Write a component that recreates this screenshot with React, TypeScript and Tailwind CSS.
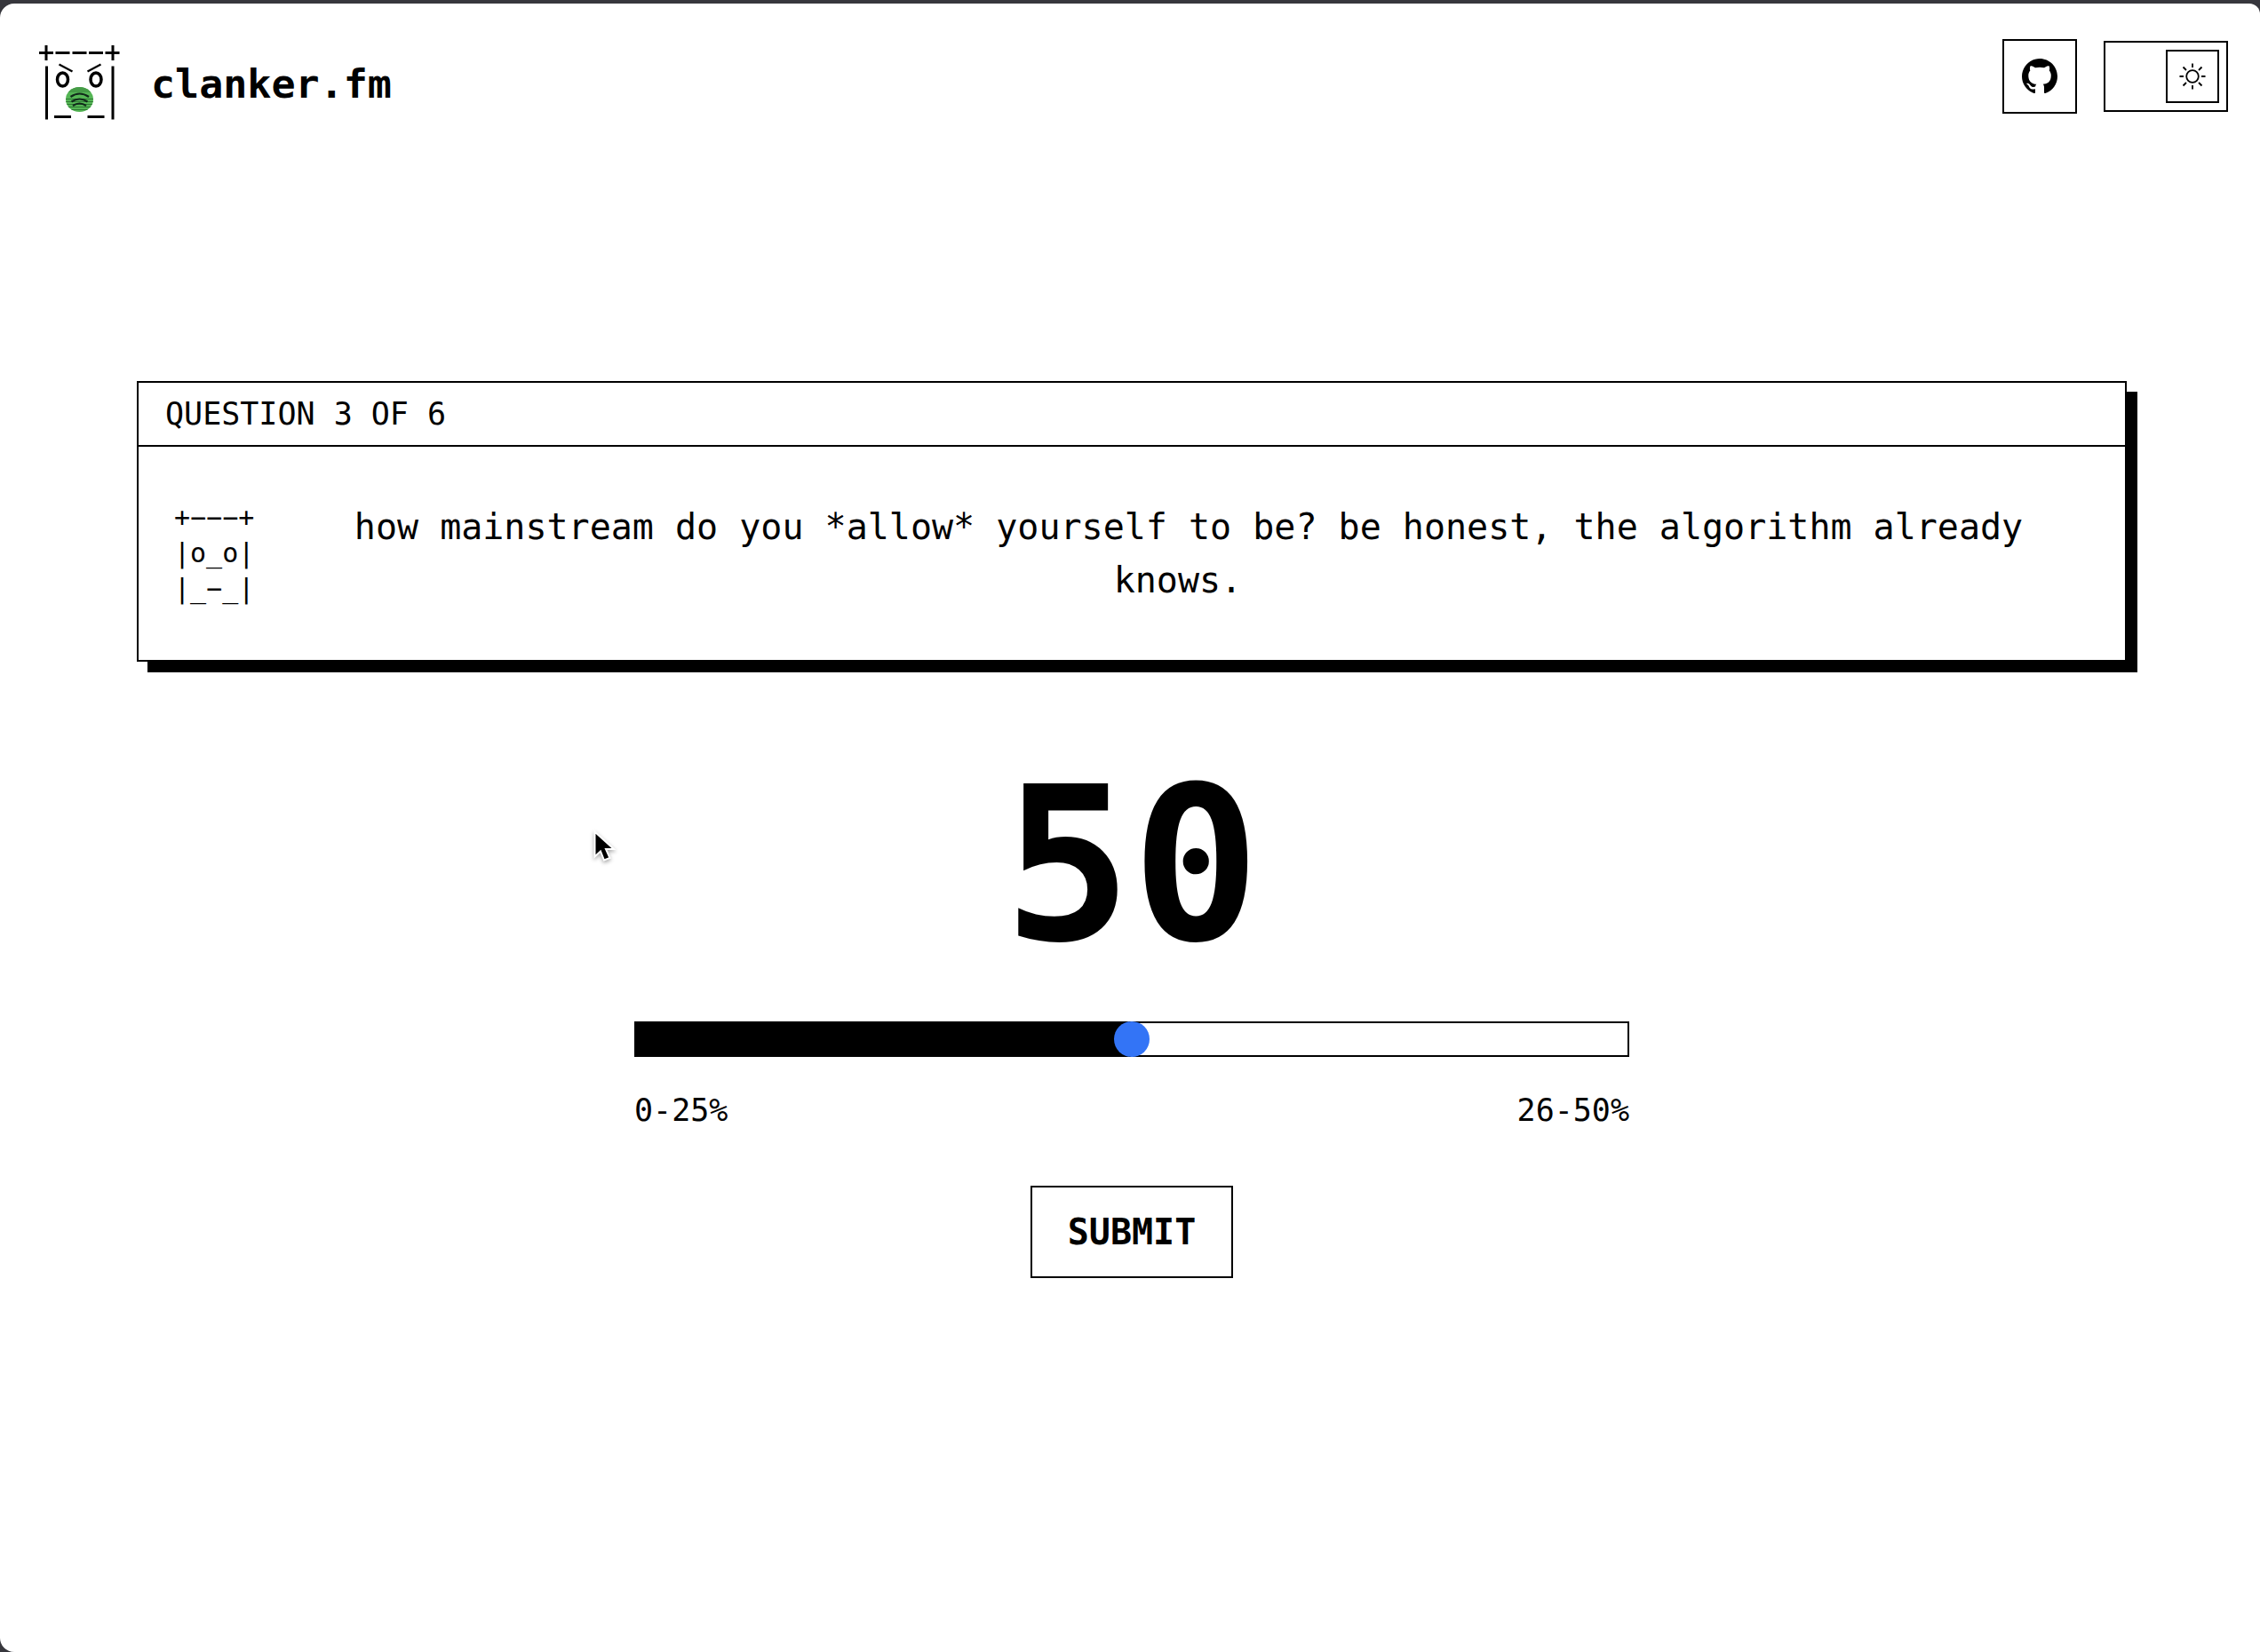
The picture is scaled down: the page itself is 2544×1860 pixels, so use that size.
import { useState } from "react";

function LogoFace() {
  return (
    <svg viewBox="0 0 92 84" className="h-[84px] w-[92px]" fill="none" stroke="#000" aria-hidden="true">
      <clipPath id="mouth">
        <ellipse cx="45.500" cy="61" rx="15.500" ry="14" />
      </clipPath>
      <path d="M0 8.500h16M18.500 8.500h16M37.500 8.500h16M56 8.500h16M74.500 8.500h16M8 0v17M83 0v17" strokeWidth="3" />
      <path d="M8.500 23.500v60M83 23.500v60" strokeWidth="3" />
      <path d="M22.500 21.500l15 8M69.500 21.500l-15 8" strokeWidth="2.200" />
      <ellipse cx="26.500" cy="38.500" rx="6" ry="7.500" strokeWidth="3.500" />
      <ellipse cx="64" cy="38.500" rx="6" ry="7.500" strokeWidth="3.500" />
      <path d="M17 80.500h19M54.500 80.500h19" strokeWidth="3" />
      <g clipPath="url(#mouth)">
        <path d="M30 47h31v28H30z" fill="#55b655" stroke="none" />
        <path d="M30 47h31v6H30z" fill="#459b47" stroke="none" />
        <path d="M30 60.500h31M30 63.500h31M30 66.500h31M30 69.500h31M30 72.500h31" stroke="#2f7a35" strokeWidth="1" />
      </g>
      <path d="M35.500 58q10-7 20.500 0M36.500 63.500q9-6 18 0M38 68q7.500-5 15 0" stroke="#10291a" strokeWidth="2.200" />
    </svg>
  );
}

function GitHubMark() {
  return (
    <svg viewBox="0 0 16 16" className="size-10" fill="#000" aria-hidden="true">
      <path d="M8 0C3.580 0 0 3.580 0 8c0 3.540 2.290 6.530 5.470 7.590.4.070.55-.17.55-.38 0-.19-.01-.82-.01-1.490-2.010.37-2.530-.49-2.690-.94-.09-.23-.48-.94-.82-1.130-.28-.15-.68-.52-.01-.53.63-.01 1.080.58 1.230.82.72 1.210 1.870.87 2.330.66.07-.52.28-.87.51-1.070-1.780-.2-3.640-.89-3.640-3.950 0-.87.31-1.590.82-2.150-.08-.2-.36-1.020.08-2.120 0 0 .67-.21 2.200.82.64-.18 1.320-.27 2-.27s1.360.09 2 .27c1.530-1.040 2.200-.82 2.200-.82.44 1.100.16 1.920.08 2.120.51.56.82 1.270.82 2.150 0 3.070-1.870 3.750-3.650 3.950.29.25.54.73.54 1.480 0 1.070-.01 1.930-.01 2.200 0 .21.15.46.55.38A8.010 8.010 0 0 0 16 8c0-4.420-3.580-8-8-8z" />
    </svg>
  );
}

function SunIcon() {
  return (
    <svg viewBox="0 0 30 30" className="size-[30px]" fill="none" stroke="#000" strokeWidth="1.800" aria-hidden="true">
      <circle cx="15" cy="15" r="6.800" />
      <path d="M15 .500v4.500M15 25v4.500M.500 15H5M25 15h4.500M4.500 4.500l3.500 3.500M22 22l3.500 3.500M25.500 4.500L22 8M8 22l-3.500 3.500" />
    </svg>
  );
}

function Pointer() {
  return (
    <svg viewBox="0 0 28 38" className="pointer-events-none absolute left-[668px] top-[930px] h-[38px] w-7 drop-shadow-[0_2px_2px_rgba(0,0,0,0.35)]" aria-hidden="true">
      <path d="M1.500 2.500v28l6.500-6 4 10 6.500-2.500-4.500-10h9z" fill="#000" stroke="#fff" strokeWidth="2" />
    </svg>
  );
}

const face = "+−−−+\n|o_o|\n|_−_|";

export default function App() {
  const [value, setValue] = useState(50);
  const [light, setLight] = useState(true);

  return (
    <div className="min-h-screen bg-[#37373d] pt-1 font-['DejaVu_Sans_Mono',monospace] text-black">
      <div className="relative flex min-h-[calc(100vh-4px)] flex-col rounded-l-[16px] rounded-tr-[12px] bg-white pl-1">
        <header className="flex items-start justify-between pl-10 pr-9 pt-10">
          <a href="#home" className="flex items-center gap-[34px] pt-[7px]">
            <LogoFace />
            <span className="pt-1 text-[45px] leading-[60px] font-bold">clanker.fm</span>
          </a>
          <div className="flex items-center gap-[30px]">
            <a href="#github" aria-label="GitHub" className="flex size-[84px] items-center justify-center border-2 border-black">
              <GitHubMark />
            </a>
            <button
              type="button"
              role="switch"
              aria-checked={light}
              aria-label="Light theme"
              onClick={() => setLight(!light)}
              className={`flex h-20 w-[140px] items-center border-2 border-black px-2 ${light ? "justify-end" : "justify-start"}`}
            >
              <span className="flex size-[60px] items-center justify-center border-2 border-black">
                <SunIcon />
              </span>
            </button>
          </div>
        </header>

        <main className="flex flex-1 flex-col items-center px-20 pt-[294px]">
          <section className="w-full max-w-[2240px] border-2 border-black bg-white shadow-[12px_12px_0_#000]">
            <h1 className="border-b-2 border-black px-[30px] py-[10px] text-[35px] leading-[50px]">QUESTION 3 OF 6</h1>
            <div className="flex items-center gap-[38px] px-10 py-[60px]">
              <pre className="w-[90px] font-['DejaVu_Sans_Mono',monospace] text-[30px] leading-10">{face}</pre>
              <p className="flex-1 text-center text-[40px] leading-[60px]">
                how mainstream do you *allow* yourself to be? be honest, the algorithm already knows.&nbsp;
              </p>
            </div>
          </section>

          <form className="flex w-full max-w-[1120px] flex-col items-center" onSubmit={(e) => e.preventDefault()}>
            <output htmlFor="mainstream" className="mt-[110px] text-[240px] leading-[240px] font-bold">
              {value}
            </output>
            <input
              id="mainstream"
              type="range"
              min={0}
              max={100}
              value={value}
              aria-label="How mainstream"
              onChange={(e) => setValue(Number(e.target.value))}
              style={{ backgroundImage: `linear-gradient(to right, #000 ${value}%, #fff ${value}%)` }}
              className="mt-[55px] h-10 w-full appearance-none border-2 border-black [&::-webkit-slider-thumb]:size-10 [&::-webkit-slider-thumb]:appearance-none [&::-webkit-slider-thumb]:rounded-full [&::-webkit-slider-thumb]:bg-[#3374f6]"
            />
            <div className="mt-[35px] flex w-full justify-between text-[35px] leading-[50px]">
              <span>0-25%</span>
              <span>26-50%</span>
            </div>
            <button type="submit" className="mt-[60px] border-2 border-black px-10 py-5 text-[40px] leading-[60px] font-bold">
              SUBMIT
            </button>
          </form>
        </main>
        <Pointer />
      </div>
    </div>
  );
}
